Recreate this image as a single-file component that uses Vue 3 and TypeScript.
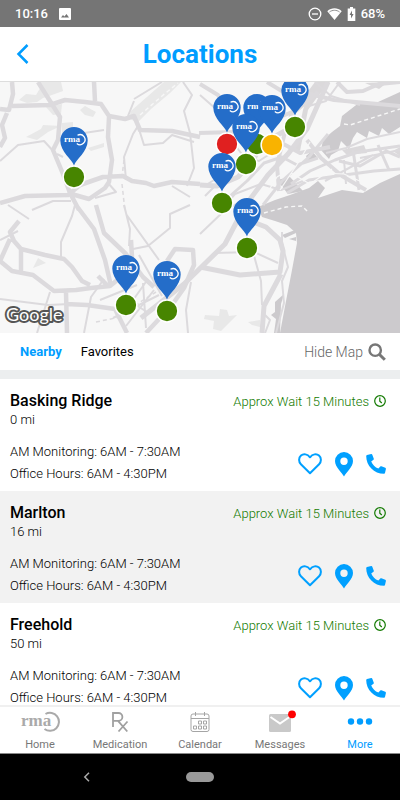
<script setup lang="ts">
import { ref } from 'vue'

interface Marker {
  name: string
  x: number
  y: number
  status: 'open' | 'busy' | 'closed'
}

interface Office {
  name: string
  distance: string
  wait: string
  monitoring: string
  hours: string
}

// x is a percentage of the map width, y is the pin's top edge inside the map
const markers: Marker[] = [
  { name: 'Englewood', x: 73.75, y: -5, status: 'open' },
  { name: 'Livingston', x: 64.25, y: 12, status: 'open' },
  { name: 'Morristown', x: 56.75, y: 12, status: 'closed' },
  { name: 'West Orange', x: 68, y: 13, status: 'busy' },
  { name: 'Basking Ridge', x: 61.5, y: 32, status: 'open' },
  { name: 'Somerset', x: 55.5, y: 71, status: 'open' },
  { name: 'Freehold', x: 61.75, y: 116, status: 'open' },
  { name: 'Allentown', x: 18.5, y: 45, status: 'open' },
  { name: 'Philadelphia', x: 31.5, y: 173, status: 'open' },
  { name: 'Marlton', x: 41.75, y: 179, status: 'open' },
]

const monitoring = '6AM - 7:30AM'
const hours = '6AM - 4:30PM'
const wait = 'Approx Wait 15 Minutes'
const offices: Office[] = [
  { name: 'Basking Ridge', distance: '0 mi', wait, monitoring, hours },
  { name: 'Marlton', distance: '16 mi', wait, monitoring, hours },
  { name: 'Freehold', distance: '50 mi', wait, monitoring, hours },
]

const tabs = ['Home', 'Medication', 'Calendar', 'Messages', 'More']
const activeTab = ref('More')
const filter = ref('Nearby')
</script>

<template>
  <div class="screen">
    <div class="status">
      <span class="clock">10:16</span>
      <svg class="picture" width="12" height="12" viewBox="0 0 12 12">
        <rect width="12" height="12" rx="1" fill="#fff" />
        <path d="M2 9.500 4 7l1.400 1.500L7.500 6 10 9.500Z" fill="#757575" />
      </svg>
      <svg class="dnd" width="14" height="14" viewBox="0 0 14 14" fill="none" stroke="#fff" stroke-width="1.300">
        <circle cx="7" cy="7" r="5.800" />
        <path d="M4 7h6" />
      </svg>
      <svg width="15" height="12" viewBox="0 0 15 12">
        <path d="M.3 3.200C4.500-.6 10.500-.6 14.700 3.200L7.500 12Z" fill="#fff" />
        <path d="M2.400 4C5.500 1.700 9.500 1.700 12.600 4" fill="none" stroke="#757575" stroke-width=".8" />
      </svg>
      <svg width="9" height="14" viewBox="0 0 9 14">
        <path d="M3 0h3v1.500h2.300V14H.7V1.500H3Z" fill="#fff" />
        <path d="M5 3.500 2.500 8H4v3.500L6.600 7H5Z" fill="#757575" />
      </svg>
      <span class="percent">68%</span>
    </div>

    <header class="header">
      <button class="back" aria-label="Back">
        <svg width="13" height="20" viewBox="0 0 13 20" fill="none" stroke="currentColor" stroke-width="2.500"><path d="M11.500 1 2.500 10l9 9" /></svg>
      </button>
      <h1>Locations</h1>
    </header>

    <section class="map" aria-label="Map">
      <svg class="ground" viewBox="0 82 400 251" preserveAspectRatio="xMidYMid slice">
        <rect y="82" width="400" height="251" fill="#f7f7f7" />
        <g fill="#e8e8e8">
          <path d="M19 100 26 94 36 95 42 85 38 82H61L63 91 52 95 43 98 37 102 27 103ZM46 107 62 104 61 114 53 115ZM80 110 85 106 96 112 93 117 85 115ZM26 137 41 129 43 125 61 126 48 132 37 140ZM62 123 73 122 73 131 62 136Z" />
          <path d="M131 111 164 82H181L170 93 151 109 137 123 129 118ZM33 268 38 258 46 263ZM88 148 104 143 104 147 91 151Z" />
          <path d="M205 315 219 316 220 309 227 310 229 316 237 315 221 331 213 329 214 321 204 319ZM248 322 260 320 260 327 252 325Z" />
        </g>
        <g fill="#cccacd">
          <path d="M342 116 360 102 378 102 400 92V127L389 134 382 128 379 136 369 131 367 138 357 132 353 138 349 149 341 141 338 151 331 155 329 159 321 150 323 140 332 132 340 126Z" />
          <path d="M400 174V333H280L286 301 292 270 297 243 296 233 287 225 275 221 262 217 258 207 275 200 290 195 309 188 318 181 325 188 318 198 342 190 363 193 380 183Z" />
          <path d="M277 180 290 177 303 191 288 194ZM306 156 312 151 317 157 308 161ZM275 302 284 294 281 304 280 333H274L276 319 271 315 275 312ZM282 235 295 230 296 233 285 238ZM289 239 296 237V241Z" />
          <path d="M315 82H330L318 96 308 110 300 151 295 149 303 110 309 90ZM365 83 388 82 379 89ZM393 151 400 147V156ZM342 150 364 145 367 153 347 155Z" opacity=".65" />
        </g>
        <g fill="none" stroke="#dcdadd" stroke-linejoin="round">
          <path stroke-width="4.500" d="M12 82 13 94 9 110 0 109M12 106 50 105 65 100 85 102 101 104 109 116 125 119 134 116 140 130 172 131 200 137M0 147 5 138 2 125 7 113M38 82 50 101 60 117 58 140 53 150 63 174 70 193 79 210M109 117 108 137 112 160 109 182 105 188 89 199 68 193M0 203 25 196 68 195 80 185 103 177 123 176 132 181 146 183 154 186 172 182 200 184M94 82 95 101M76 205 94 229 105 260 111 286M96 205 104 233 126 254 143 277 154 287" />
          <path stroke-width="4.500" d="M19 221 10 232 14 241 21 249 45 255 64 259 72 267 82 281 90 285M21 249 21 273M10 239 0 261 12 271 33 275 54 291 76 290 91 288 110 286 126 273 132 257 131 240M66 292 67 333M66 304 87 305 115 309 127 333M109 287 98 276M167 261 175 249 193 250 194 265 184 288 172 305 146 333" />
          <path stroke-width="5" d="M141 318 184 284 225 244 245 206 268 175 288 154 307 129 328 82M200 267 240 275 280 272 283 251 280 240 266 227 248 220M281 274 264 306 262 333M200 185 217 186 238 177 253 161 261 144 283 132 304 121" />
          <path stroke-width="4" d="M200 84 218 95 227 111 239 121 256 120 280 117 297 110 318 92M199 133 235 132 257 138 278 141 300 153 330 147M267 82 285 93 310 94 334 100 400 106M337 82 347 92 363 91 379 84 400 82M304 82 285 132 277 165 279 191M307 140 321 158 342 176 366 190" />
          <path stroke-width="3" d="M291 184 310 171 335 160 358 152 400 146M287 193 309 180 337 176 374 171 400 169M339 161 360 166 386 151 400 157M353 150 359 190M378 145 389 170M263 205 282 181 309 157 328 134M220 205 247 181 264 163 282 157 297 165 318 158" />
          <path stroke-width="2" d="M0 161 18 145 44 141 55 153M32 210 53 201 71 201M95 198 116 192 108 183M126 180 124 157 133 134 138 126 144 145 163 143 172 135 194 142M134 101 128 116M134 99 162 82M183 82 192 95 184 111 190 133 194 168 187 186M84 133 104 130M57 154 63 157M172 186 190 197" />
          <path stroke-width="2" d="M75 205 72 216 61 242 61 260M8 205 29 219M124 205 130 229 129 246M126 214 159 260M190 205 170 214 170 228 148 246 133 249M0 240 18 231M0 299 48 305 70 304M50 292 37 333M84 333 91 297 104 279M191 282 186 310 188 333M139 255 162 296M126 310 148 279M113 318 159 295" />
          <path stroke-width="2" d="M200 234 224 211 243 200M213 253 254 252 278 263M253 252 261 281 262 305M282 232 282 243 288 267 282 281 284 303 276 333M265 315 270 320 265 333M200 95 216 109 230 111M235 145 244 157 259 161 276 150M206 185 219 177 227 155 232 139M315 82 331 96 360 105M340 82 326 101 309 106" />
          <path stroke-width="2" d="M326 153 346 148 367 139 400 132M344 160 346 184M360 158 400 150M325 181 373 155M205 196 217 184 230 181M221 210 235 194 261 184 281 190 303 181M120 295 147 312M126 326 154 290M143 283 146 328M100 300 137 285" />
          <path stroke-width="1.500" stroke-dasharray="4 3" d="M124 160 122 177M122 184 125 211M96 322 130 315M129 309 156 292" />
        </g>
        <g fill="none" stroke="#f7f7f7" stroke-width="1.400" stroke-dasharray="4 3">
          <path d="M344 124 350 125 400 109M264 213 286 207 302 206 309 213M140 115 162 96 178 83" />
        </g>
        <g stroke="#f7f7f7" stroke-width="1.200" fill="none">
          <path d="M280 190 300 160 310 142M291 173 310 184 332 169M266 195 277 177 294 167M219 201 246 175M322 173 344 174 362 182" />
        </g>
      </svg>

      <button
        v-for="m in markers"
        :key="m.name"
        class="marker"
        :aria-label="m.name"
        :style="{ left: m.x + '%', top: m.y + 'px' }"
      >
        <svg width="28" height="62" viewBox="0 0 28 62">
          <circle cx="14" cy="50" r="10.900" :class="['dot', m.status]" />
          <path d="M14 38.500C12 32 .3 25 .3 13.500a13.700 13.500 0 0 1 27.400 0C27.700 25 16 32 14 38.500Z" fill="#246dc9" />
          <text x="4" y="15" class="pin-text">rma</text>
          <path d="M17.500 8.300A5 5 0 1 1 16.800 16.500" fill="none" stroke="#fff" stroke-width="1.300" />
        </svg>
      </button>

      <svg class="google" width="64" height="26" viewBox="0 0 64 26">
        <text x="4" y="18">Google</text>
      </svg>
    </section>

    <div class="filters">
      <button :class="{ active: filter === 'Nearby' }" @click="filter = 'Nearby'">Nearby</button>
      <button :class="{ active: filter === 'Favorites' }" @click="filter = 'Favorites'">Favorites</button>
      <button class="hide-map">Hide Map</button>
      <button class="search" aria-label="Search">
        <svg width="18" height="18" viewBox="0 0 18 18" fill="none" stroke="currentColor">
          <circle cx="7.200" cy="7.200" r="5.700" stroke-width="2.400" />
          <path d="m11.500 11.500 5.300 5.300" stroke-width="3" />
        </svg>
      </button>
    </div>

    <main class="list">
      <article v-for="o in offices" :key="o.name" class="card">
        <div class="row">
          <h2>{{ o.name }}</h2>
          <p class="wait">
            {{ o.wait }}
            <svg width="12" height="12" viewBox="0 0 12 12" fill="none" stroke="currentColor" stroke-width="1.200">
              <circle cx="6" cy="6" r="5.300" /><path d="M5.800 2.500V6.200L7.800 8" />
            </svg>
          </p>
        </div>
        <p class="distance">{{ o.distance }}</p>
        <div class="row details">
          <div class="times">
            <p>AM Monitoring: {{ o.monitoring }}</p>
            <p>Office Hours: {{ o.hours }}</p>
          </div>
          <div class="actions">
            <button aria-label="Add to favorites">
              <svg width="24" height="22" viewBox="0 0 24 22">
                <path d="M12 20.300 2.900 11.200C.4 8.600.6 4.700 3 2.600 5.500.4 9.400 1 12 4.300 14.600 1 18.500.4 21 2.600c2.400 2.100 2.600 6 .1 8.600Z" fill="none" stroke="currentColor" stroke-width="2" stroke-linejoin="round" />
              </svg>
            </button>
            <button aria-label="Directions">
              <svg width="18" height="25" viewBox="0 0 18 25">
                <path fill-rule="evenodd" d="M9 24.500C7 20.500 0 15 0 9a9 9 0 0 1 18 0c0 6-7 11.500-9 15.500ZM9 5.500a3.700 3.700 0 1 0 0 7.400 3.700 3.700 0 0 0 0-7.400Z" fill="currentColor" />
              </svg>
            </button>
            <button aria-label="Call">
              <svg width="20" height="20" viewBox="0 0 20 20">
                <path d="M1 .9 5.200.1c.5-.1.9.2 1.100.6l1.500 4c.2.400 0 .8-.3 1.100L5.200 7.400c1.400 3.200 3.800 5.700 7.200 7.200l1.900-2.100c.3-.3.7-.4 1.100-.3l3.900 1.600c.5.200.7.600.6 1.100L19 19c-.1.500-.5.800-1 .8C8.100 19.800.2 11.800.2 2c0-.5.300-1 .8-1.100Z" fill="currentColor" />
              </svg>
            </button>
          </div>
        </div>
      </article>
    </main>

    <nav class="tabs">
      <a
        v-for="tab in tabs"
        :key="tab"
        href="#"
        :class="{ active: tab === activeTab }"
        @click.prevent="activeTab = tab"
      >
        <svg v-if="tab === 'Home'" width="40" height="24" viewBox="0 0 40 24">
          <text x="1" y="16" class="logo-text">rma</text>
          <path d="M25.500 4A9 9 0 1 1 24.500 19" fill="none" stroke="#aaa" stroke-width="2" />
        </svg>
        <svg v-else-if="tab === 'Medication'" width="18" height="24" viewBox="0 0 18 24" fill="none" stroke="#a0a0a0" stroke-width="1.800">
          <path d="M2 17V3H7.500a3.900 3.900 0 0 1 0 7.800H2M7 10.800 16.300 21.500M16.500 11.500 7.500 21.500" />
        </svg>
        <svg v-else-if="tab === 'Calendar'" width="20" height="24" viewBox="0 0 20 24" fill="none" stroke="#a5a5a5">
          <rect x="1" y="4" width="18" height="17.500" rx="2" />
          <path d="M1 8.500h18M5.500 2v4M14.500 2v4" />
          <path d="M8.500 11h3v3h-3ZM13.500 11h3v3h-3ZM3.500 16h3v3h-3ZM8.500 16h3v3h-3ZM13.500 16h3v3h-3Z" />
        </svg>
        <svg v-else-if="tab === 'Messages'" width="32" height="24" viewBox="0 0 32 24">
          <rect x="5" y="4" width="22" height="18" rx="1.500" fill="#c9c9c9" />
          <path d="m6.500 7 9.500 6.500L25.500 7" fill="none" stroke="#fff" stroke-width="2" />
          <circle cx="28" cy="4.300" r="3.900" fill="#fe0000" />
        </svg>
        <svg v-else width="26" height="24" viewBox="0 0 26 24" fill="currentColor">
          <circle cx="4" cy="11.500" r="3.200" /><circle cx="13" cy="11.500" r="3.200" /><circle cx="22" cy="11.500" r="3.200" />
        </svg>
        <span>{{ tab }}</span>
      </a>
    </nav>

    <div class="system">
      <button aria-label="System back">
        <svg width="8" height="10" viewBox="0 0 8 10" fill="none" stroke="#aaa" stroke-width="1.500"><path d="M6 .8 1.800 5 6 9.200" /></svg>
      </button>
      <button class="pill" aria-label="System home"></button>
    </div>
  </div>
</template>

<style>
body {
  margin: 0;
}
</style>

<style scoped>
.screen {
  display: flex;
  flex-direction: column;
  height: 100vh;
  overflow: hidden;
  background: #fff;
  color: #000;
  font-family: Roboto, 'Liberation Sans', sans-serif;
}
button {
  padding: 0;
  border: 0;
  background: none;
  color: inherit;
  font: inherit;
  cursor: pointer;
}
svg {
  display: block;
  flex: none;
}
h1,
h2,
p {
  margin: 0;
}
.status {
  display: flex;
  flex: none;
  align-items: center;
  gap: 5px;
  height: 27px;
  padding: 0 15px;
  background: #757575;
  color: #fff;
  font-size: 13px;
  font-weight: 500;
}
.picture {
  margin-left: 6px;
}
.dnd {
  margin-left: auto;
}
.header {
  display: grid;
  flex: none;
  grid-template-columns: 28px 1fr 28px;
  align-items: center;
  height: 54px;
  padding: 0 16px;
  border-bottom: 1px solid #ddd;
  color: #009dff;
}
.header h1 {
  font-size: 26px;
  font-weight: 700;
  text-align: center;
}
.map {
  position: relative;
  flex: none;
  height: 251px;
  overflow: hidden;
}
.ground {
  width: 100%;
  height: 100%;
}
.marker {
  position: absolute;
  width: 28px;
  height: 62px;
  transform: translateX(-50%);
}
.dot {
  stroke: #fff;
  stroke-width: 1.5px;
}
.open {
  fill: #478500;
}
.busy {
  fill: #f9b300;
}
.closed {
  fill: #e02020;
}
.pin-text {
  fill: #fff;
  font: bold 9px 'Liberation Serif', serif;
}
.google {
  position: absolute;
  bottom: 4px;
  left: 2px;
}
.google text {
  fill: #fff;
  stroke: #555;
  stroke-width: 4px;
  stroke-linejoin: round;
  paint-order: stroke;
  font: 18px Lato, sans-serif;
}
.filters {
  display: flex;
  flex: none;
  align-items: center;
  gap: 19px;
  height: 37px;
  padding: 0 14px 0 20px;
  border-bottom: 9px solid #eceeef;
  font-size: 13px;
}
.filters .active {
  color: #009dff;
  font-weight: 700;
}
.filters .hide-map {
  margin-left: auto;
  color: #666;
  font-size: 14px;
  font-weight: 300;
}
.search {
  margin-left: -14px;
  color: #777;
}
.list {
  flex: 1;
  min-height: 0;
  overflow-y: auto;
  scrollbar-width: none;
}
.card {
  padding: 12px 14px 6px 10px;
}
.card:nth-child(even) {
  background: #f2f2f2;
}
.row {
  display: flex;
  align-items: center;
  justify-content: space-between;
}
.card h2 {
  font-size: 16px;
  font-weight: 500;
  line-height: 20px;
}
.wait {
  display: flex;
  align-items: center;
  gap: 5px;
  color: #127a00;
  font-size: 13px;
  font-weight: 300;
}
.distance {
  font-size: 13px;
  font-weight: 300;
  line-height: 18px;
}
.details {
  margin-top: 12px;
}
.times {
  font-size: 13px;
  font-weight: 300;
  line-height: 22px;
}
.actions {
  display: flex;
  align-items: center;
  gap: 13px;
  padding-top: 2px;
  color: #00a0ff;
}
.tabs {
  display: grid;
  flex: none;
  grid-template-columns: repeat(5, 1fr);
  height: 46px;
  border-top: 2px solid #f0f0f0;
  border-bottom: 1px solid #888;
}
.tabs a {
  display: flex;
  flex-direction: column;
  align-items: center;
  padding-top: 3px;
  color: #777;
  font-size: 11px;
  line-height: 16px;
  gap: 3px;
  text-decoration: none;
}
.tabs .active {
  color: #009dff;
}
.logo-text {
  fill: #aaa;
  font: bold 17px 'Liberation Serif', serif;
}
.system {
  display: grid;
  flex: none;
  grid-template-columns: 1fr 28px 1fr;
  align-items: center;
  height: 46px;
  background: #000;
}
.system button:first-child {
  justify-self: center;
  margin-right: 12px;
}
.system .pill {
  height: 10px;
  border-radius: 5px;
  background: #999;
}
</style>
